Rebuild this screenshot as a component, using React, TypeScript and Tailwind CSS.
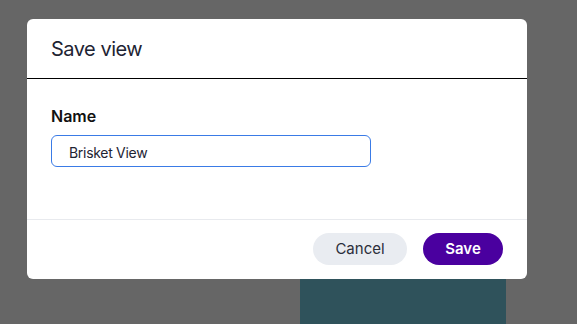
export default function App() {
  return (
    <div
      className="relative h-[324px] w-[577px] overflow-hidden bg-[#666666] pl-[27px] pt-[19px]"
      style={{ fontFamily: 'Inter, "Liberation Sans", sans-serif' }}
    >
      {/* page content behind the overlay */}
      <div className="absolute left-[300px] top-[200px] h-[140px] w-[206px] bg-[#2f525b]" />

      <div className="relative flex h-[260px] w-[500px] flex-col rounded-md bg-white">
        <div className="flex h-[60px] items-center border-b border-black px-6 pt-[1px]">
          <h2 className="text-[20px] tracking-[-0.5px] text-[#1e2433]">Save view</h2>
        </div>

        <div className="flex-1 px-6 pt-[25px]">
          <label className="mb-[7px] block text-[16px] font-semibold leading-6 text-[#111]">Name</label>
          <input
            type="text"
            defaultValue="Brisket View"
            className="block h-[32px] w-[320px] rounded-md border border-[#3a7be6] px-[17px] pt-[2px] text-[14px] tracking-[-0.3px] text-[#1e2433] outline-none"
          />
        </div>

        <div className="flex h-[60px] items-start justify-end gap-4 border-t border-[#e8eaee] px-6 pt-[13px]">
          <button
            type="button"
            className="h-[32px] w-[94px] rounded-full bg-[#e9ecf1] text-[15px] text-[#2b2e3a]"
          >
            Cancel
          </button>
          <button
            type="button"
            className="h-[32px] w-[80px] rounded-full bg-[#4a009f] text-[15px] font-semibold text-white"
          >
            Save
          </button>
        </div>
      </div>
    </div>
  );
}
